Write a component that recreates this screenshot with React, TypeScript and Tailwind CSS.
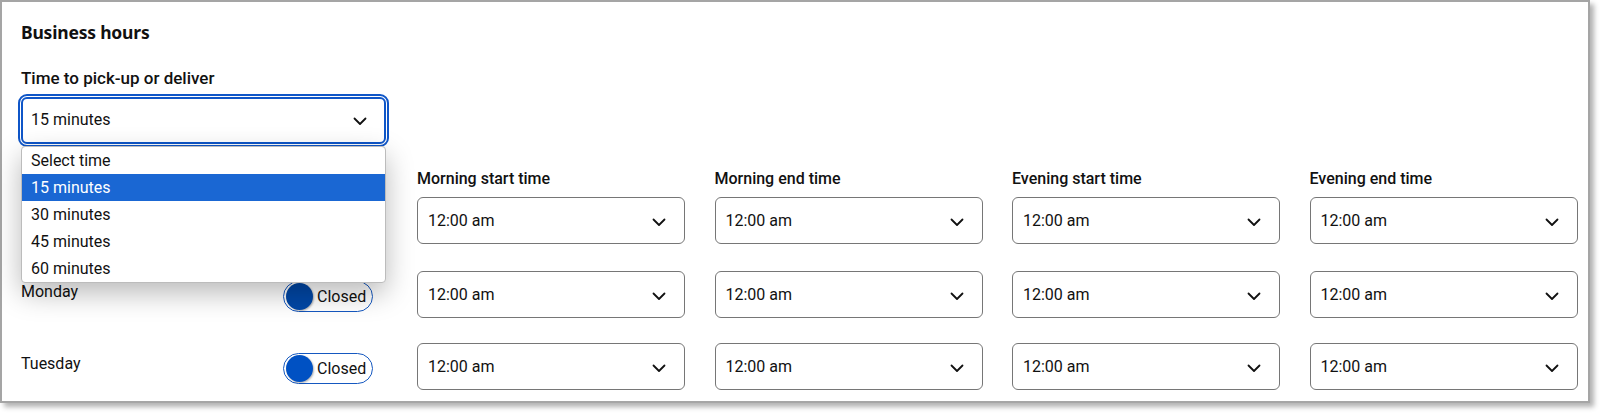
import React from "react";

const days = ["Sunday", "Monday", "Tuesday"];
const columns = [
  "Morning start time",
  "Morning end time",
  "Evening start time",
  "Evening end time",
];
const options = ["Select time", "15 minutes", "30 minutes", "45 minutes", "60 minutes"];

function Chevron() {
  return (
    <svg width="14" height="9" viewBox="0 0 14 9" fill="none" className="mt-[3px] shrink-0">
      <path d="M1.5 1.5L7 7L12.5 1.5" stroke="#111" strokeWidth="1.8" strokeLinecap="round" strokeLinejoin="round" />
    </svg>
  );
}

function TimeSelect() {
  return (
    <div className="h-[47px] rounded-[6px] border border-[#767676] bg-white flex items-center justify-between pl-[10px] pr-[18px] text-[16px] text-[#111]">
      <span>12:00 am</span>
      <Chevron />
    </div>
  );
}

function ClosedToggle({ dark }: { dark?: boolean }) {
  return (
    <div className="w-[90px] h-[31px] rounded-full border border-[#1558c0] shadow-[inset_0_0_0_1px_#ffffff] flex items-center pl-[2px] gap-[4px]">
      <span
        className={
          dark
            ? "w-[27px] h-[27px] rounded-full bg-[#0047a6] shadow-[1px_1px_2px_rgba(0,0,0,0.3)]"
            : "w-[27px] h-[27px] rounded-full bg-[#0051c3] shadow-[1px_1px_2px_rgba(0,0,0,0.3)]"
        }
      />
      <span className="text-[16px] text-[#111]">Closed</span>
    </div>
  );
}

function DayRow({ day, index }: { day: string; index: number }) {
  const first = index === 0;
  // the first row sits under the open dropdown, so its day cell is not seen
  return (
    <div className={first ? "flex" : index === 1 ? "flex mt-[27px]" : "flex mt-[25px]"}>
      <div className={first ? "invisible w-[262px] pt-[37px] text-[16px] leading-6" : "w-[262px] pt-[9px] text-[16px] leading-6"}>
        {day}
      </div>
      <div className={first ? "invisible w-[134px] pt-[38px]" : "w-[134px] pt-[10px]"}>
        <ClosedToggle dark={index === 1} />
      </div>
      <div className="flex gap-[29.5px]">
        {columns.map((c) => (
          <div key={c} className="w-[268px]">
            {first && (
              <div className="text-[16px] leading-5 font-medium text-[#111] mt-[1px] mb-[8px]">{c}</div>
            )}
            <TimeSelect />
          </div>
        ))}
      </div>
    </div>
  );
}

export default function App() {
  return (
    <div className="w-[1602px] h-[415px] bg-white text-[#111] font-['Roboto',_'Liberation_Sans',_sans-serif]">
      <div className="w-[1590px] h-[403px] border-2 border-[#a5a5a5] bg-white shadow-[4px_4px_5px_rgba(0,0,0,0.3)] pl-[19px] pr-[9px] pt-[18px]">
        <h2 className="text-[17.5px] leading-6 font-bold font-['Noto_Sans',_sans-serif] tracking-[-0.2px] text-[#111]">
          Business hours
        </h2>
        <div className="mt-[24px]">
          <div className="text-[17px] leading-5 font-medium">Time to pick-up or deliver</div>
          <div className="relative mt-[8.5px] w-[365px]">
            <div className="h-[47px] rounded-[6px] border-2 border-[#0f56c8] outline-2 outline-offset-1 outline-[#0f56c8] bg-white flex items-center justify-between pl-[8px] pr-[17px] text-[16px]">
              <span>15 minutes</span>
              <Chevron />
            </div>
            <ul className="absolute z-10 left-0 top-[49px] w-[365px] bg-white border border-[#bcbcbc] rounded-[4px] shadow-[0_10px_28px_rgba(0,0,0,0.28)] overflow-hidden">
              {options.map((o) => (
                <li
                  key={o}
                  className={
                    o === "15 minutes"
                      ? "h-[27px] leading-[27px] pl-[9px] text-[16px] bg-[#1a67d3] text-white"
                      : "h-[27px] leading-[27px] pl-[9px] text-[16px] text-[#111]"
                  }
                >
                  {o}
                </li>
              ))}
            </ul>
          </div>
        </div>
        <div className="mt-[24.5px]">
          {days.map((d, i) => (
            <DayRow key={d} day={d} index={i} />
          ))}
        </div>
      </div>
    </div>
  );
}
